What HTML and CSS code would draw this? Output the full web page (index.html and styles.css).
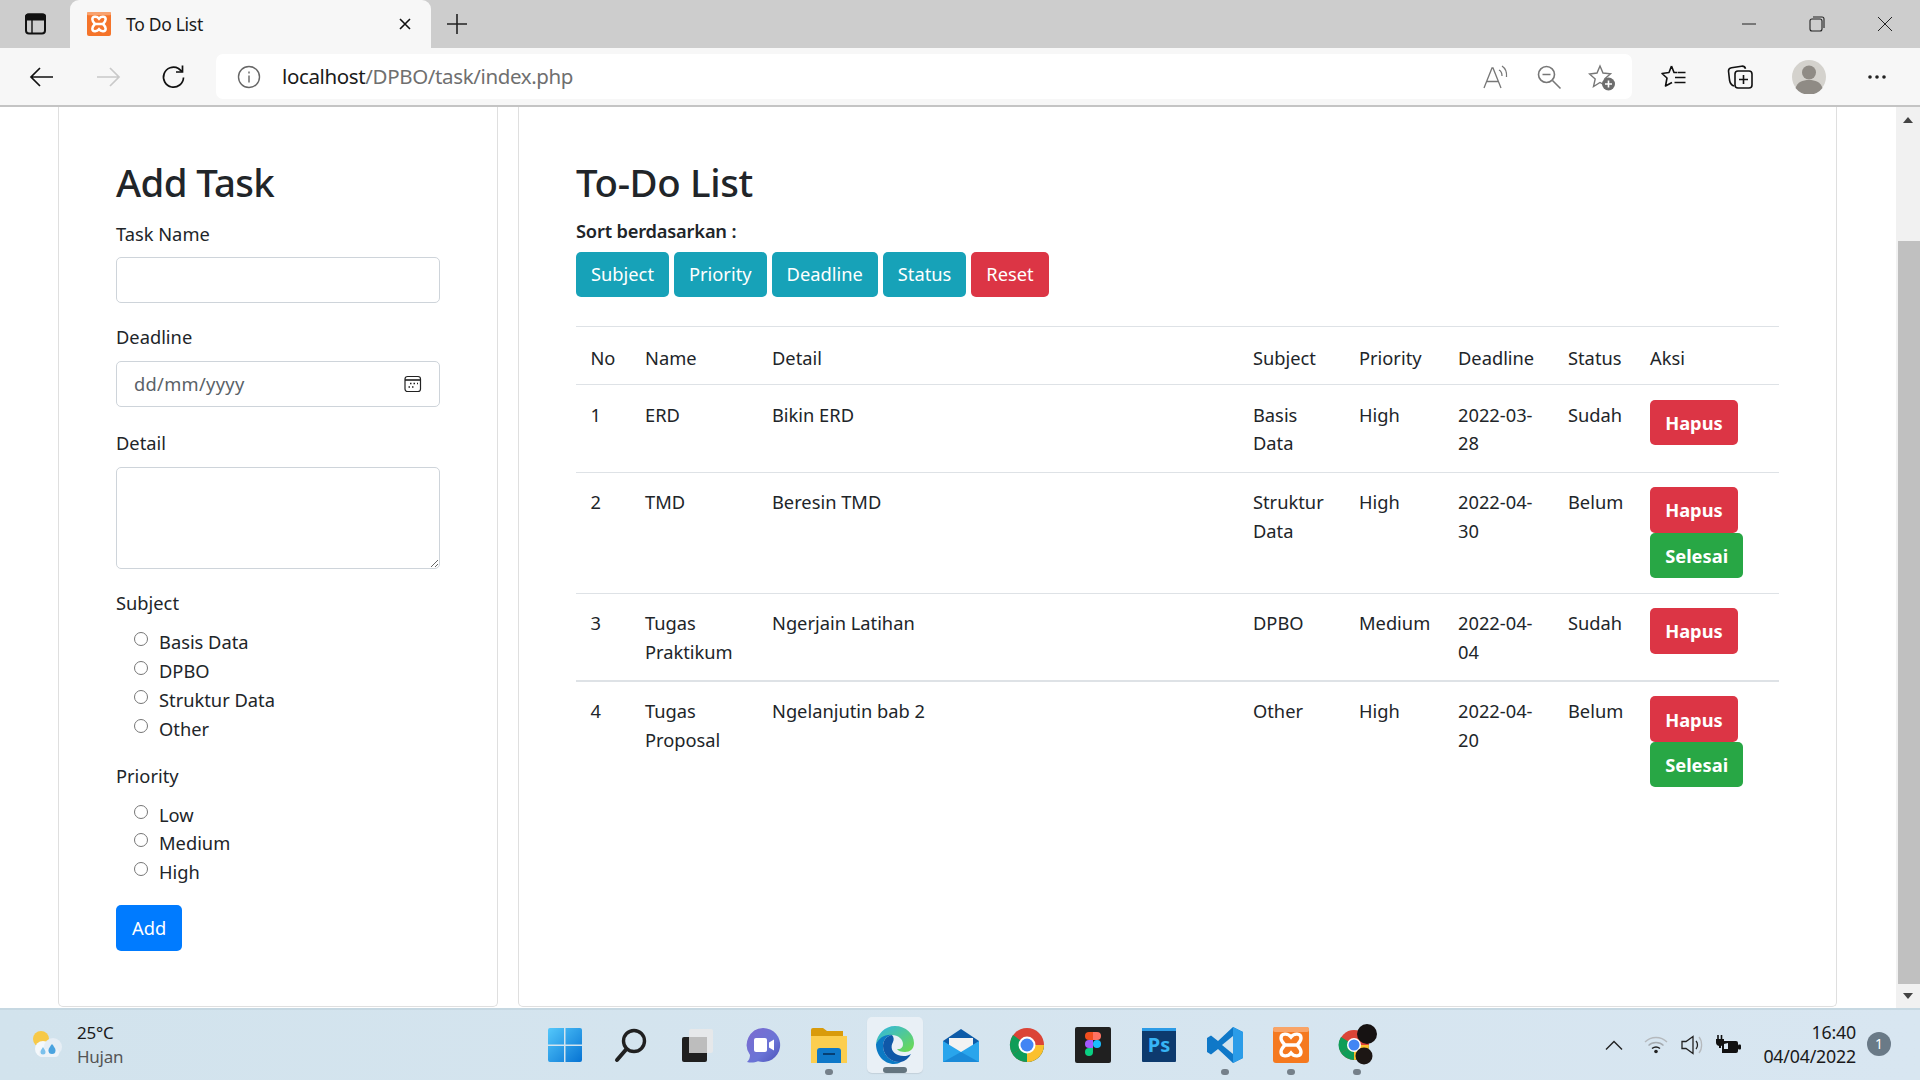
FILE: index.html
```html
<!DOCTYPE html>
<html lang="en">
<head>
<meta charset="utf-8">
<title>To Do List</title>
<link rel="stylesheet" href="styles.css">
</head>
<body>
<div class="window">
  <div class="tabbar">
    <div class="tab-side"><svg width="24" height="24" viewBox="0 0 24 24" fill="none" stroke="#111" stroke-width="2"><rect x="2" y="2.500" width="19" height="19" rx="3"/><path d="M2 4.500a2 2 0 0 1 2-2h15a2 2 0 0 1 2 2v3H2z" fill="#111"/><path d="M8 7v14" stroke-width="1.400"/></svg></div>
    <div class="tab">
      <svg class="favicon" width="24" height="24" viewBox="0 0 36 36"><rect width="36" height="36" rx="3" fill="#f5742a"/><rect width="36" height="5" rx="2" fill="#f9a26e"/><path d="M18 10C15 6 8 6 8 11C8 14 10 16 12 18C10 20 8 22 8 25C8 30 15 30 18 26C21 30 28 30 28 25C28 22 26 20 24 18C26 16 28 14 28 11C28 6 21 6 18 10ZM12 18H24" fill="none" stroke="#fff" stroke-width="3.800"/></svg>
      <span class="tab-title">To Do List</span>
      <svg class="tab-close" width="14" height="14" viewBox="0 0 14 14" stroke="#111" stroke-width="1.600"><path d="M2 2l10 10M12 2L2 12"/></svg>
    </div>
    <div class="tab-new"><svg width="22" height="22" viewBox="0 0 22 22" stroke="#222" stroke-width="1.600"><path d="M11 1v20M1 11h20"/></svg></div>
    <div class="win-controls">
      <span class="win-btn"><svg width="16" height="16" viewBox="0 0 16 16" stroke="#222" stroke-width="1"><path d="M1 8h14"/></svg></span>
      <span class="win-btn"><svg width="16" height="16" viewBox="0 0 16 16" fill="none" stroke="#222" stroke-width="1.100"><rect x="1" y="3" width="12" height="12" rx="2"/><path d="M4 1h9a2 2 0 0 1 2 2v9"/></svg></span>
      <span class="win-btn"><svg width="16" height="16" viewBox="0 0 16 16" stroke="#222" stroke-width="1"><path d="M1 1l14 14M15 1L1 15"/></svg></span>
    </div>
  </div>

  <div class="toolbar">
    <span class="tool"><svg width="26" height="26" viewBox="0 0 26 26" fill="none" stroke="#111" stroke-width="1.700"><path d="M24 13H2M11 4l-9 9 9 9"/></svg></span>
    <span class="tool"><svg width="26" height="26" viewBox="0 0 26 26" fill="none" stroke="#c9c9c9" stroke-width="1.700"><path d="M2 13h22M15 4l9 9-9 9"/></svg></span>
    <span class="tool"><svg width="26" height="26" viewBox="0 0 26 26" fill="none" stroke="#111" stroke-width="1.700"><path d="M22.500 13.500A10 10 0 1 1 17.500 4.500L21 7.500"/><path d="M21.500 1.500v6.500h-6.500"/></svg></span>
    <div class="address">
      <svg class="addr-info" width="24" height="24" viewBox="0 0 24 24" fill="none" stroke="#666" stroke-width="1.400"><circle cx="12" cy="12" r="10.500"/><path d="M12 10.500v7M12 6.500v2"/></svg>
      <span class="url"><span class="url-host">localhost</span>/DPBO/task/index.php</span>
      <span class="addr-icons">
        <svg width="28" height="28" viewBox="0 0 28 28" fill="none" stroke="#777" stroke-width="1.300"><path d="M2 25L10 5h1l8 20M5 18.500h11"/><path d="M17 7c2 1 3 3 3 6M20 3c3 2 5 6 4.500 11"/></svg>
        <svg width="26" height="26" viewBox="0 0 26 26" fill="none" stroke="#777" stroke-width="1.600"><circle cx="10.500" cy="10.500" r="8"/><path d="M6.500 10.500h8M16.500 16.500l8 8"/></svg>
        <svg width="28" height="28" viewBox="0 0 28 28"><path d="M12 3l3 7 7.500.7-5.700 5 1.700 7.500L12 19.500 5.500 23.500l1.700-7.500-5.700-5L9 10z" fill="none" stroke="#777" stroke-width="1.400"/><circle cx="20.500" cy="21" r="6.500" fill="#6d6d6d"/><path d="M20.500 17.500v7M17 21h7" stroke="#fff" stroke-width="1.600"/></svg>
      </span>
    </div>
    <span class="tool tool-right tool-fav"><svg width="26" height="26" viewBox="0 0 26 26" fill="none" stroke="#111" stroke-width="1.600" stroke-linejoin="round"><path d="M10.500 2L8 8.500 1 9.500l5 4.500-1.500 8L11 18.500M10.500 2l2.500 6.500h3M16.500 8.500h8M14 13.500h10.500M13.500 18.500h11"/></svg></span>
    <span class="tool tool-right tool-coll"><svg width="26" height="26" viewBox="0 0 26 26" fill="none" stroke="#111" stroke-width="1.600"><path d="M7 22C4 21 3 19 2.500 16L1.500 7c0-2 1-3 3-3.300l10-1.500c2-.2 3.500.5 4 2.500"/><rect x="8" y="7" width="17" height="17" rx="3"/><path d="M16.500 11v9M12 15.500h9"/></svg></span>
    <span class="tool tool-right"><svg width="34" height="34" viewBox="0 0 34 34"><circle cx="17" cy="17" r="17" fill="#d4d2cd"/><circle cx="17" cy="12.500" r="7" fill="#8f8b85"/><path d="M3.500 28c2-6 7-8 13.500-8s11.500 2 13.500 8a17 17 0 0 1-27 0z" fill="#8f8b85"/></svg></span>
    <span class="tool tool-right tool-more"><svg width="20" height="6" viewBox="0 0 20 6" fill="#222"><circle cx="3" cy="3" r="1.800"/><circle cx="10" cy="3" r="1.800"/><circle cx="17" cy="3" r="1.800"/></svg></span>
  </div>

  <div class="viewport">
    <main class="content">
      <section class="card card-form">
        <h2 class="title">Add Task</h2>
        <form>
          <div class="group group-name">
            <label class="label">Task Name</label>
            <input class="input" type="text">
          </div>
          <div class="group group-date">
            <label class="label">Deadline</label>
            <div class="input date"><span class="date-text">dd/mm/yyyy</span>
              <svg width="18" height="18" viewBox="0 0 18 18" fill="none" stroke="#222" stroke-width="1.200"><rect x="1" y="1.500" width="15.500" height="15" rx="2.500"/><path d="M1 5h15.500" stroke-width="1.600"/><path d="M6 8.500h1.500M9.500 8.500h1.500M13 8.500h1M4.500 12h1.500M8 12h1.500" stroke-width="1.600"/></svg>
            </div>
          </div>
          <div class="group group-detail">
            <label class="label">Detail</label>
            <textarea class="input area"></textarea>
          </div>
          <div class="group group-subject">
            <div class="label">Subject</div>
            <label class="radio"><input type="radio" name="s"><span>Basis Data</span></label>
            <label class="radio"><input type="radio" name="s"><span>DPBO</span></label>
            <label class="radio"><input type="radio" name="s"><span>Struktur Data</span></label>
            <label class="radio"><input type="radio" name="s"><span>Other</span></label>
          </div>
          <div class="group group-priority">
            <div class="label">Priority</div>
            <label class="radio"><input type="radio" name="p"><span>Low</span></label>
            <label class="radio"><input type="radio" name="p"><span>Medium</span></label>
            <label class="radio"><input type="radio" name="p"><span>High</span></label>
          </div>
          <button class="btn btn-blue" type="button">Add</button>
        </form>
      </section>

      <section class="card card-list">
        <h2 class="title title-list">To-Do List</h2>
        <div class="sort-label">Sort berdasarkan :</div>
        <div class="sort">
          <button class="btn btn-teal" type="button">Subject</button>
          <button class="btn btn-teal" type="button">Priority</button>
          <button class="btn btn-teal" type="button">Deadline</button>
          <button class="btn btn-teal" type="button">Status</button>
          <button class="btn btn-red" type="button">Reset</button>
        </div>
        <table class="tasks">
          <colgroup>
            <col class="c-no"><col class="c-name"><col class="c-detail"><col class="c-subject"><col class="c-priority"><col class="c-deadline"><col class="c-status"><col class="c-aksi">
          </colgroup>
          <thead>
            <tr><th>No</th><th>Name</th><th>Detail</th><th>Subject</th><th>Priority</th><th>Deadline</th><th>Status</th><th>Aksi</th></tr>
          </thead>
          <tbody>
            <tr><td>1</td><td>ERD</td><td>Bikin ERD</td><td>Basis Data</td><td>High</td><td>2022-03-28</td><td>Sudah</td><td class="actions"><button class="btn btn-act btn-red" type="button">Hapus</button></td></tr>
            <tr><td>2</td><td>TMD</td><td>Beresin TMD</td><td>Struktur Data</td><td>High</td><td>2022-04-30</td><td>Belum</td><td class="actions"><button class="btn btn-act btn-red" type="button">Hapus</button><button class="btn btn-act btn-green" type="button">Selesai</button></td></tr>
            <tr><td>3</td><td>Tugas Praktikum</td><td>Ngerjain Latihan</td><td>DPBO</td><td>Medium</td><td>2022-04-04</td><td>Sudah</td><td class="actions"><button class="btn btn-act btn-red" type="button">Hapus</button></td></tr>
            <tr class="row-thick"><td>4</td><td>Tugas Proposal</td><td>Ngelanjutin bab 2</td><td>Other</td><td>High</td><td>2022-04-20</td><td>Belum</td><td class="actions"><button class="btn btn-act btn-red" type="button">Hapus</button><button class="btn btn-act btn-green" type="button">Selesai</button></td></tr>
          </tbody>
        </table>
      </section>
    </main>
    <div class="scrollbar">
      <svg class="sb-arrow" width="10" height="6" viewBox="0 0 10 6" fill="#444"><path d="M5 0l5 6H0z"/></svg>
      <div class="sb-thumb"></div>
      <svg class="sb-arrow" width="10" height="6" viewBox="0 0 10 6" fill="#444"><path d="M5 6l5-6H0z"/></svg>
    </div>
  </div>

  <footer class="taskbar">
    <div class="weather">
      <svg width="36" height="36" viewBox="0 0 36 36"><circle cx="12" cy="12" r="8" fill="#f7c948"/><circle cx="14" cy="22" r="8" fill="#f4f8fb"/><circle cx="24" cy="20" r="9" fill="#e6eef5"/><rect x="10" y="22" width="20" height="8" rx="4" fill="#eef3f8"/><path d="M23 17c3 4 3.500 5 3.500 6.500a3.500 3.500 0 0 1-7 0c0-1.500 .5-2.500 3.500-6.500z" fill="#4aa3df"/><path d="M14 20c2 3 2.500 4 2.500 5a2.500 2.500 0 0 1-5 0c0-1 .5-2 2.500-5z" fill="#7cc1ec"/></svg>
      <div class="weather-text"><span>25°C</span><span class="weather-sub">Hujan</span></div>
    </div>
    <div class="apps">
      <span class="app"><svg width="36" height="36" viewBox="0 0 36 36"><defs><linearGradient id="w" x1="0" y1="0" x2="1" y2="1"><stop offset="0" stop-color="#54c8fb"/><stop offset="1" stop-color="#0673d3"/></linearGradient></defs><path d="M1 3a2 2 0 0 1 2-2h14v16.500H1zM18.500 1H33a2 2 0 0 1 2 2v14.500H18.500zM1 19h16v16H3a2 2 0 0 1-2-2zM18.500 19H35v14a2 2 0 0 1-2 2H18.500z" fill="url(#w)"/></svg></span>
      <span class="app"><svg width="36" height="36" viewBox="0 0 36 36" fill="none" stroke="#202020"><circle cx="21" cy="14" r="10.500" stroke-width="3.400"/><path d="M13.500 22L4 33" stroke-width="4" stroke-linecap="round"/></svg></span>
      <span class="app"><svg width="36" height="36" viewBox="0 0 36 36"><rect x="3" y="10" width="25" height="25" rx="2" fill="#1f1f1f"/><rect x="10" y="2" width="24" height="24" rx="2" fill="#e9e9e9" fill-opacity=".85"/><rect x="10" y="10" width="18" height="16" fill="#bdbdbd"/></svg></span>
      <span class="app"><svg width="36" height="36" viewBox="0 0 36 36"><defs><linearGradient id="m" x1="0" y1="0" x2="1" y2="1"><stop offset="0" stop-color="#7c6bd0"/><stop offset=".6" stop-color="#6a74d6"/><stop offset="1" stop-color="#4c52b8"/></linearGradient></defs><path d="M18 1a17 17 0 1 1-5 33.200C10 35.500 6 36 2 35c2-2 3-4 3-7A17 17 0 0 1 18 1z" fill="url(#m)"/><rect x="9" y="11" width="13" height="14" rx="2" fill="#fff"/><path d="M24 15.500l5-3v11l-5-3z" fill="#fff"/></svg></span>
      <span class="app"><svg width="36" height="36" viewBox="0 0 36 36"><path d="M0 3a2 2 0 0 1 2-2h10l4 3h16v6H0z" fill="#d99b0b"/><path d="M0 9h36v27H0z" fill="#fcce4f"/><path d="M6 36V24a3 3 0 0 1 3-3h18a3 3 0 0 1 3 3v12z" fill="#0f78c8"/><rect x="12" y="26" width="12" height="2" fill="#063f73"/></svg><i class="dot"></i></span>
      <span class="app app-active"><svg width="38" height="38" viewBox="0 0 38 38"><defs><linearGradient id="e1" x1="0" y1="0" x2="1" y2="1"><stop offset="0" stop-color="#2fb4e8"/><stop offset="1" stop-color="#6fdc4a"/></linearGradient></defs><path d="M19 0c11 0 19 8 19 17 0 6-4 9-9 9-4 0-7-1-8-3 0 0 6 1 6-5 0-5-5-9-11-9C9 9 3 13 0 18 1 8 9 0 19 0z" fill="url(#e1)"/><path d="M0 18C3 12 9 8 16 9c-6 1-9 6-9 11 0 9 8 17 18 16-2 1-4 2-7 2C8 38 0 29 0 18z" fill="#0c7ac4"/><path d="M7 20c0 9 8 17 18 16 4-1 8-4 10-8-3 2-8 3-13 1-6-2-8-8-5-13 1-2 1-5-1-7-6 1-9 6-9 11z" fill="#0f58a8"/></svg><i class="bar"></i></span>
      <span class="app"><svg width="36" height="34" viewBox="0 0 36 34"><path d="M0 13L18 1l18 12v6H0z" fill="#0d5ba8"/><path d="M6 10h24v10L18 27 6 20z" fill="#f2f2f2"/><path d="M0 13l18 11 18-11v21H0z" fill="#29a5ec"/><path d="M0 34l18-10 18 10z" fill="#1a8ad8"/></svg></span>
      <span class="app"><svg width="36" height="36" viewBox="0 0 36 36"><circle cx="18" cy="18" r="17" fill="#db4437"/><path d="M18 18L3.500 27A17 17 0 0 1 4 8z" fill="#0f9d58"/><path d="M3.500 27L18 18h17a17 17 0 0 1-17 17C12 35 6.500 32 3.500 27z" fill="#0f9d58"/><path d="M18 18h17a17 17 0 0 1-17 17z" fill="#fbc02d"/><circle cx="18" cy="18" r="8.500" fill="#fff"/><circle cx="18" cy="18" r="6.500" fill="#4285f4"/></svg></span>
      <span class="app"><svg width="36" height="36" viewBox="0 0 36 36"><rect width="36" height="36" rx="2" fill="#202020"/><path d="M18 5h-4a4 4 0 0 0 0 8h4z" fill="#f24e1e"/><path d="M18 5h4a4 4 0 0 1 0 8h-4z" fill="#ff7262"/><path d="M18 13h-4a4 4 0 0 0 0 8h4z" fill="#a259ff"/><circle cx="22" cy="17" r="4" fill="#1abcfe"/><path d="M14 21h4v4a4 4 0 1 1-4-4z" fill="#0acf83"/></svg></span>
      <span class="app"><svg width="36" height="36" viewBox="0 0 36 36"><rect x="1" y="1" width="34" height="34" rx="1" fill="#0d3a6e"/><path d="M1 1h34v3H1z" fill="#2c9be6"/><text class="ps" x="18" y="25">Ps</text></svg></span>
      <span class="app"><svg width="36" height="36" viewBox="0 0 36 36"><path d="M26 0l10 5v26l-10 5-15-14-7 5.500L0 25V11l4-2.500 7 5.500z" fill="#0f78c8"/><path d="M26 9v18l-11-9z" fill="#d3e3ed"/><path d="M26 0l10 5v26l-10 5z" fill="#2b9ce8"/></svg><i class="dot"></i></span>
      <span class="app"><svg width="36" height="36" viewBox="0 0 36 36"><rect width="36" height="36" rx="3" fill="#f5791f"/><rect width="36" height="5" rx="2" fill="#f9a467"/><path d="M18 10C15 6 8 6 8 11C8 14 10 16 12 18C10 20 8 22 8 25C8 30 15 30 18 26C21 30 28 30 28 25C28 22 26 20 24 18C26 16 28 14 28 11C28 6 21 6 18 10ZM12 18H24" fill="none" stroke="#fff" stroke-width="3.400"/></svg><i class="dot"></i></span>
      <span class="app"><svg width="44" height="44" viewBox="0 0 44 44"><circle cx="19" cy="22" r="15" fill="#db4437"/><path d="M19 22L6 30A15 15 0 0 1 6 14z" fill="#0f9d58"/><path d="M6 30l13-8h15a15 15 0 0 1-15 15c-5 0-10-3-13-7z" fill="#0f9d58"/><path d="M19 22h15a15 15 0 0 1-15 15z" fill="#fbc02d"/><circle cx="19" cy="22" r="7" fill="#fff"/><circle cx="19" cy="22" r="5.500" fill="#4285f4"/><circle cx="32" cy="11" r="10" fill="#161212"/><circle cx="29" cy="33" r="8.500" fill="#1c1614"/></svg><i class="dot"></i></span>
    </div>
    <div class="tray">
      <svg class="tray-icon tray-chevron" width="20" height="12" viewBox="0 0 20 12" fill="none" stroke="#222" stroke-width="1.400"><path d="M2 10.500l8-8 8 8"/></svg>
      <svg class="tray-icon tray-wifi" width="24" height="18" viewBox="0 0 24 18" fill="none"><path d="M1 6c6-6 16-6 22 0" stroke="#b5b9bd" stroke-width="1.300"/><path d="M4.500 9.500c4-4 11-4 15 0" stroke="#a5abb0" stroke-width="1.300"/><path d="M8 12.500c2.500-2 5.500-2 8 0" stroke="#222" stroke-width="1.500"/><circle cx="12" cy="15.500" r="1.800" fill="#222"/></svg>
      <svg class="tray-icon tray-vol" width="24" height="22" viewBox="0 0 24 22" fill="none" stroke="#222" stroke-width="1.300"><path d="M1 7.500h4l7-5v17l-7-5H1z"/><path d="M15 7c2 2 2 6 0 8"/><path d="M18 3c3.500 4 3.500 12 0 16" stroke="#b5b9bd"/></svg>
      <svg class="tray-icon tray-bat" width="26" height="22" viewBox="0 0 26 22"><path d="M7 7h14a2 2 0 0 1 2 2v8a2 2 0 0 1-2 2H7z" fill="#111"/><rect x="23" y="10.500" width="3" height="5" rx="1" fill="#111"/><path d="M3 1v4M6.500 1v4" stroke="#111" stroke-width="1.600"/><path d="M1 5h8v3.500a3.500 3.500 0 0 1-3 3.400V14H4v-2.100a3.500 3.500 0 0 1-3-3.400z" fill="#111"/><path d="M9 10l4-1v6H9z" fill="#d8e6f1"/></svg>
      <div class="clock"><span>16:40</span><span>04/04/2022</span></div>
      <span class="badge">1</span>
    </div>
  </footer>
</div>
</body>
</html>
```

FILE: styles.css
```css
* { box-sizing: border-box; }
html, body { margin: 0; height: 100%; overflow: hidden; }
body { font-family: "Noto Sans", "Open Sans", sans-serif; font-size: 18.300px; line-height: 28.800px; color: #212529; }
.window { width: 1920px; height: 1080px; display: flex; flex-direction: column; }

/* Tab strip */
.tabbar { height: 48px; background: #cdcdcd; display: flex; align-items: flex-end; flex: none; }
.tab-side { width: 70px; height: 48px; display: flex; align-items: center; justify-content: center; padding-left: 2px; }
.tab { width: 361px; height: 48px; background: #f7f7f7; border-radius: 9px 9px 0 0; display: flex; align-items: center; padding: 0 19px 0 17px; }
.tab-title { margin-left: 15px; flex: 1; font-size: 17.500px; color: #1a1a1a; letter-spacing: -0.3px; }
.tab-new { width: 52px; height: 48px; display: flex; align-items: center; justify-content: center; }
.win-controls { margin-left: auto; display: flex; height: 48px; padding-right: 1px; }
.win-btn { width: 68px; display: flex; align-items: center; justify-content: center; }

/* Toolbar */
.toolbar { height: 59px; flex: none; background: #f7f7f7; border-bottom: 2px solid #c4c4c4; display: flex; align-items: center; padding: 0 11px 0 9px; }
.tool { width: 66px; height: 46px; display: flex; align-items: center; justify-content: center; flex: none; }
.tool-right { width: 67px; }
.tool-fav { padding-right: 2px; }
.tool-coll { padding-right: 4px; }
.tool-more { padding-left: 3px; }
.address { width: 1416px; height: 45px; margin: 0 9px 0 9px; background: #fff; border-radius: 7px; display: flex; align-items: center; padding-left: 21px; }
.url { margin-left: 21px; font-size: 20.500px; color: #6f6f6f; letter-spacing: -0.370px; }
.url-host { color: #1a1a1a; }
.addr-icons { margin-left: auto; display: flex; align-items: center; gap: 26px; padding-right: 16px; }

/* Page */
.viewport { flex: 1; display: flex; min-height: 0; background: #fff; }
.content { width: 1896px; display: flex; gap: 20px; padding-left: 58px; }
.card { border: 1px solid #dfdfdf; border-top: 0; border-radius: 0 0 5px 5px; padding: 52px 57px 0; margin-bottom: 1px; }
.card-form { width: 440px; }
.card-list { width: 1319px; }
.title { margin: 0 0 15px; font-size: 38.400px; line-height: 46px; font-weight: 500; letter-spacing: -0.650px; }
.title-list { margin-bottom: 12px; letter-spacing: -0.350px; }
.group { margin-bottom: 19.200px; }
.group-name { margin-bottom: 20px; }
.group-name .label { margin-bottom: 8.200px; }
.group-date { margin-bottom: 22px; }
.group-detail { margin-bottom: 20px; }
.group-subject { margin-bottom: 18.200px; }
.group-priority { margin-bottom: 18.400px; }
.label { display: block; margin-bottom: 9px; }
.group-subject .label { margin-bottom: 11px; }
.group-priority .label { margin-bottom: 10px; }
.input { display: block; width: 324px; height: 46px; border: 1px solid #ced4da; border-radius: 5px; background: #fff; padding: 7px 17px; font: inherit; color: #495057; }
.date { display: flex; align-items: center; justify-content: space-between; padding-right: 17px; }
.date-text { padding-top: 2px; letter-spacing: 0.300px; color: #5a6268; }
.area { height: 102px; resize: vertical; }
.radio { display: flex; align-items: flex-start; height: 28.800px; padding-left: 18px; }
.radio input { width: 14px; height: 14px; margin: 4px 11px 0 0; flex: none; }

/* Buttons */
.btn { font: inherit; height: 45.600px; padding: 0 15px; border: 0; border-radius: 5px; color: #fff; display: block; }
.btn-blue { background: #007bff; padding: 0 16px; }
.btn-teal { background: #17a2b8; }
.btn-red { background: #dc3545; }
.btn-green { background: #28a745; }
.btn-act { font-weight: 700; width: fit-content; padding: 2px 15.200px 0; }
.sort-label { font-weight: 600; height: 28.800px; margin-bottom: 6px; letter-spacing: -0.200px; }
.sort { display: flex; gap: 5px; margin-bottom: 29px; }

/* Table */
.tasks { width: 1203px; border-collapse: collapse; table-layout: fixed; }
.tasks th, .tasks td { text-align: left; vertical-align: top; font-weight: 400; border-top: 1px solid #dee2e6; }
.tasks th { padding: 16.400px 14.400px 11.600px; }
.tasks td { padding: 15.400px 14.400px 13.400px; }
.tasks td.actions { padding-top: 14.400px; padding-bottom: 14.400px; }
.row-thick td { border-top-width: 2px; }
.c-no { width: 54.600px; }
.c-name { width: 127px; }
.c-detail { width: 481px; }
.c-subject { width: 106px; }
.c-priority { width: 99px; }
.c-deadline { width: 110px; }
.c-status { width: 82px; }

/* Scrollbar */
.scrollbar { width: 24px; background: #f1f1f1; display: flex; flex-direction: column; align-items: center; padding-top: 10px; }
.sb-arrow { flex: none; }
.sb-thumb { width: 22px; height: 743px; margin: 118px 0 9px 1px; background: #c0c0c0; }

/* Taskbar */
.taskbar { height: 72px; flex: none; display: grid; grid-template-columns: 1fr auto 1fr; align-items: center; background: linear-gradient(90deg, #d2e3ed, #d8e6f1); border-top: 2px solid #c6d8e2; }
.weather { display: flex; align-items: center; padding-left: 29px; gap: 12px; }
.weather-text { display: flex; flex-direction: column; font-size: 17px; line-height: 24px; letter-spacing: -0.250px; color: #1a1a1a; }
.weather-sub { color: #555; }
.apps { display: flex; gap: 10px; align-items: center; padding-left: 1px; }
.app { width: 56px; height: 56px; display: flex; align-items: center; justify-content: center; position: relative; border-radius: 5px; }
.app-active { background: #e9f0f6; box-shadow: 0 1px 1px #c3d0da; }
.dot { position: absolute; left: 24px; bottom: -2px; width: 8px; height: 6px; border-radius: 3px; background: #75808a; }
.bar { position: absolute; left: 16px; bottom: 0; width: 24px; height: 6px; border-radius: 3px; background: #64757f; }
.ps { font-family: "Noto Sans", sans-serif; font-size: 20px; font-weight: 700; fill: #37b4f5; text-anchor: middle; }
.tray { display: flex; align-items: center; justify-content: flex-end; padding-right: 29px; }
.tray-icon { flex: none; }
.tray-chevron { margin-right: 20px; }
.tray-wifi { margin-right: 13px; }
.tray-vol { margin-right: 10.500px; }
.tray-bat { margin-right: 22px; }
.clock { display: flex; flex-direction: column; align-items: flex-end; font-size: 17.800px; line-height: 24px; letter-spacing: -0.200px; color: #1a1a1a; padding-bottom: 2px; }
.badge { width: 24px; height: 24px; margin-left: 11px; margin-bottom: 2px; border-radius: 50%; background: #6a7a87; color: #fff; font-size: 14px; line-height: 24px; text-align: center; }
```
